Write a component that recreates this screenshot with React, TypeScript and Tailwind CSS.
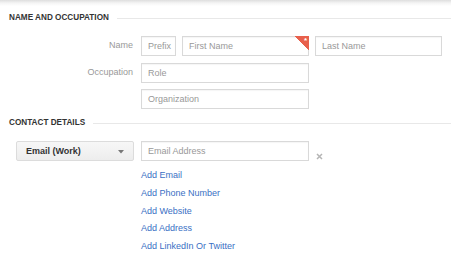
import React from "react";

function SectionHeading({ title }: { title: string }) {
  return (
    <div className="flex h-[12px] items-center pl-[9px]">
      <span className="text-[8.2px] font-bold uppercase leading-none text-[#333]">{title}</span>
      <div className="ml-[8px] h-px flex-1 bg-[#e8e8e8]" />
    </div>
  );
}

function Field({
  placeholder,
  width,
  required,
}: {
  placeholder: string;
  width: string;
  required?: boolean;
}) {
  return (
    <div
      className={`relative flex h-[20px] items-center border border-[#d9d9d9] bg-white px-[6px] shadow-[inset_0_1px_1px_rgba(0,0,0,0.04)] ${width}`}
    >
      <span className="text-[9px] leading-none text-[#999]">{placeholder}</span>
      {required && (
        <div className="absolute right-[-1px] top-[-1px] h-[14px] w-[14px] bg-[linear-gradient(225deg,#e8604c_50%,transparent_50%)]">
          <span className="absolute right-[2px] top-[1px] text-[8px] font-bold leading-none text-white">*</span>
        </div>
      )}
    </div>
  );
}

const LINKS = ["Add Email", "Add Phone Number", "Add Website", "Add Address", "Add LinkedIn Or Twitter"];

export default function App() {
  return (
    <div className="h-[258px] w-[451px] overflow-hidden bg-white font-['Liberation_Sans',Arial,sans-serif]">
      <div className="h-[6px] bg-gradient-to-b from-[#dedede] via-[#f4f4f4] to-white" />

      <div className="mt-[6px]">
        <SectionHeading title="Name and Occupation" />
      </div>

      <div className="mt-[12px] flex items-center">
        <div className="w-[133px] text-right text-[9px] text-[#999]">Name</div>
        <div className="ml-[8px] flex gap-[6px]">
          <Field placeholder="Prefix" width="w-[35px]" />
          <Field placeholder="First Name" width="w-[127px]" required />
          <Field placeholder="Last Name" width="w-[127px]" />
        </div>
      </div>

      <div className="mt-[7px] flex items-center">
        <div className="w-[133px] text-right text-[9px] text-[#999]">Occupation</div>
        <div className="ml-[8px]">
          <Field placeholder="Role" width="w-[168px]" />
        </div>
      </div>

      <div className="mt-[6px] flex items-center">
        <div className="ml-[141px]">
          <Field placeholder="Organization" width="w-[168px]" />
        </div>
      </div>

      <div className="mt-[8px]">
        <SectionHeading title="Contact Details" />
      </div>

      <div className="mt-[12px] flex items-center">
        <div className="ml-[16px] flex h-[20px] w-[118px] items-center justify-between rounded-[2px] border border-[#dcdcdc] bg-gradient-to-b from-[#f7f7f7] to-[#ededed] pl-[9px] pr-[9px]">
          <span className="text-[9px] font-bold leading-none text-[#333]">Email (Work)</span>
          <svg width="6" height="4" viewBox="0 0 6 4" className="mt-[1px]">
            <path d="M0 0 L6 0 L3 3.5 Z" fill="#777" />
          </svg>
        </div>
        <div className="ml-[7px]">
          <Field placeholder="Email Address" width="w-[168px]" />
        </div>
        <svg width="7" height="7" viewBox="0 0 7 7" className="ml-[7px] mt-[10px]">
          <path d="M1 1 L6 6 M6 1 L1 6" stroke="#b5b5b5" strokeWidth="1.5" />
        </svg>
      </div>

      <div className="ml-[141px] mt-[6px] flex flex-col">
        {LINKS.map((l) => (
          <a key={l} className="text-[9px] leading-[17.75px] text-[#3a6fc4]">
            {l}
          </a>
        ))}
      </div>
    </div>
  );
}
